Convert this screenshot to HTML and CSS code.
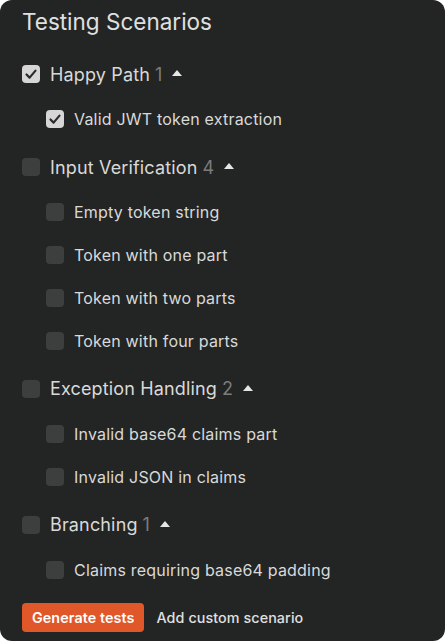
FILE: index.html
```html
<!DOCTYPE html>
<html>
<head>
<meta charset="utf-8">
<link rel="stylesheet" href="styles.css">
</head>
<body>
<div class="panel">
  <h1 class="title">Testing Scenarios</h1>

  <div class="row group">
    <span class="box checked"><svg viewBox="0 0 18 18"><path d="M4.5 9.5 L7.6 12.6 L13.5 5.6" /></svg></span>
    <span class="label">Happy Path</span><span class="count">1</span><span class="caret"></span>
  </div>
  <div class="row child">
    <span class="box checked"><svg viewBox="0 0 18 18"><path d="M4.5 9.5 L7.6 12.6 L13.5 5.6" /></svg></span>
    <span class="label">Valid JWT token extraction</span>
  </div>

  <div class="row group">
    <span class="box"></span>
    <span class="label">Input Verification</span><span class="count">4</span><span class="caret"></span>
  </div>
  <div class="row child"><span class="box"></span><span class="label">Empty token string</span></div>
  <div class="row child"><span class="box"></span><span class="label">Token with one part</span></div>
  <div class="row child"><span class="box"></span><span class="label">Token with two parts</span></div>
  <div class="row child"><span class="box"></span><span class="label">Token with four parts</span></div>

  <div class="row group">
    <span class="box"></span>
    <span class="label">Exception Handling</span><span class="count">2</span><span class="caret"></span>
  </div>
  <div class="row child"><span class="box"></span><span class="label">Invalid base64 claims part</span></div>
  <div class="row child"><span class="box"></span><span class="label">Invalid JSON in claims</span></div>

  <div class="row group">
    <span class="box"></span>
    <span class="label">Branching</span><span class="count">1</span><span class="caret"></span>
  </div>
  <div class="row child"><span class="box"></span><span class="label">Claims requiring base64 padding</span></div>

  <div class="actions">
    <button class="btn-primary">Generate tests</button>
    <button class="btn-link">Add custom scenario</button>
  </div>
</div>
</body>
</html>
```

FILE: styles.css
```css
html, body {
  margin: 0;
  padding: 0;
  background: #ffffff;
}

.panel {
  width: 445px;
  height: 641px;
  box-sizing: border-box;
  background: #232524;
  border-radius: 12px;
  padding: 0 22px;
  display: flex;
  flex-direction: column;
  font-family: Inter, "Liberation Sans", sans-serif;
  color: #d9d9d9;
  overflow: hidden;
}

.title {
  margin: 0;
  height: 47.5px;
  flex: none;
  line-height: 44px;
  font-size: 22.5px;
  font-weight: 400;
  color: #e0e0e0;
  letter-spacing: 0;
}

.row {
  display: flex;
  align-items: center;
  height: 42.8px;
  flex: none;
}

.group {
  margin: 5.5px 0 2px;
  font-size: 18px;
  letter-spacing: 0.15px;
}

.child {
  padding-left: 24px;
  font-size: 16px;
  letter-spacing: 0.2px;
}

.box {
  width: 18px;
  height: 18px;
  border-radius: 4px;
  background: #3d3f3e;
  flex: none;
  margin-right: 10px;
  display: flex;
}

.box.checked {
  background: #d6d6d6;
}

.box svg {
  width: 18px;
  height: 18px;
}

.box svg path {
  fill: none;
  stroke: #2a2b2b;
  stroke-width: 2.2;
  stroke-linecap: round;
  stroke-linejoin: round;
}

.label {
  color: #d9d9d9;
}

.count {
  color: #7b7c7c;
  margin-left: 5px;
}

.caret {
  width: 0;
  height: 0;
  border-left: 5px solid transparent;
  border-right: 5px solid transparent;
  border-bottom: 6px solid #e6e6e6;
  margin-left: 10px;
  margin-top: -2px;
}

.actions {
  display: flex;
  align-items: center;
  margin-top: 11.5px;
  gap: 12px;
}

.btn-primary {
  height: 29px;
  padding: 0 10px;
  border: none;
  border-radius: 4px;
  background: #e0582a;
  color: #ffffff;
  font-family: Inter, "Liberation Sans", sans-serif;
  font-size: 14.3px;
  font-weight: 600;
  letter-spacing: 0.1px;
}

.btn-link {
  border: none;
  background: none;
  padding: 0;
  color: #e0e0e0;
  font-family: Inter, "Liberation Sans", sans-serif;
  font-size: 14.3px;
  font-weight: 500;
  letter-spacing: 0.1px;
}
```
